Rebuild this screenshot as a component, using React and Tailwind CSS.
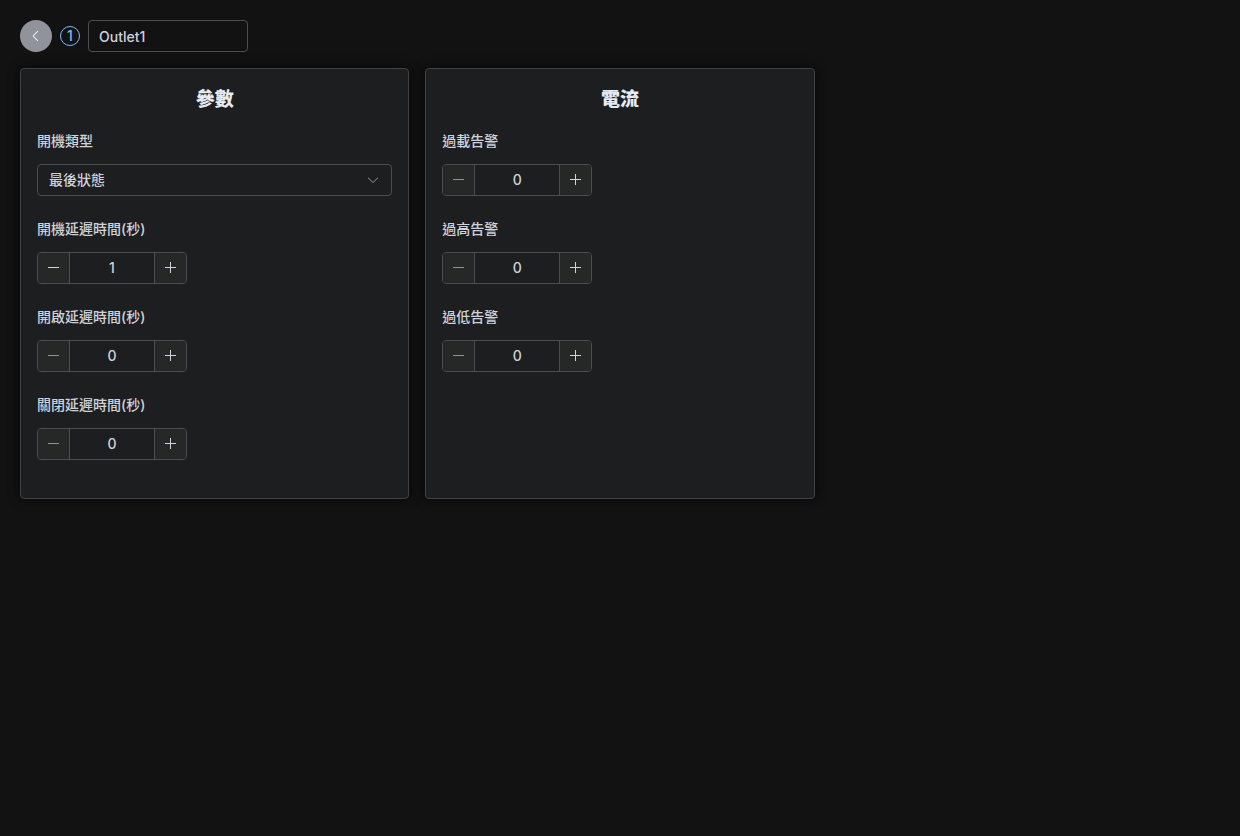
import { useState } from "react";

const ICONS = {
  left: "M609.408 149.376 277.76 489.6a32 32 0 0 0 0 44.672l331.648 340.352a29.12 29.12 0 0 0 41.728 0 30.592 30.592 0 0 0 0-42.752L339.264 511.936l311.872-319.872a30.592 30.592 0 0 0 0-42.688 29.12 29.12 0 0 0-41.728 0z",
  down: "M831.872 340.864 512 652.672 192.128 340.864a30.592 30.592 0 0 0-42.752 0 29.12 29.12 0 0 0 0 41.6L489.664 714.24a32 32 0 0 0 44.672 0l340.288-331.712a29.12 29.12 0 0 0 0-41.728 30.592 30.592 0 0 0-42.752 0z",
};

function Icon({ name, className }) {
  return (
    <svg viewBox="0 0 1024 1024" fill="currentColor" aria-hidden="true" className={className}>
      <path d={ICONS[name]} />
    </svg>
  );
}

function StepIcon({ plus }) {
  return (
    <svg viewBox="0 0 11 12" stroke="currentColor" fill="none" aria-hidden="true" className="h-3 w-[11px]">
      <path d={plus ? "M0 5.5h11M5.5 0v11" : "M0 5.5h11"} />
    </svg>
  );
}

function Card({ title, children }) {
  return (
    <section className="rounded border border-[#414243] bg-[#1d1e1f] p-4 shadow-[0_0_12px_rgba(0,0,0,0.72)]">
      <h2 className="mb-4 text-center text-[19px] leading-[29px] font-black text-[#e5eaf3]">{title}</h2>
      {children}
    </section>
  );
}

function Field({ id, label, children }) {
  return (
    <div className="mb-[22px]">
      <label htmlFor={id} className="mb-3 block leading-[22px]">
        {label}
      </label>
      {children}
    </div>
  );
}

function NumberField({ id, label, initial }) {
  const [value, setValue] = useState(initial);
  return (
    <Field id={id} label={label}>
      <div className="flex h-8 w-[150px] overflow-hidden rounded border border-[#4c4d4f]">
        <button
          type="button"
          aria-label={`${label} −`}
          disabled={value <= 0}
          onClick={() => setValue(value - 1)}
          className="flex w-8 shrink-0 items-center justify-center border-r border-[#4c4d4f] bg-[#262727] disabled:text-[#8d9095]"
        >
          <StepIcon />
        </button>
        <input
          id={id}
          inputMode="numeric"
          value={value}
          onChange={(e) => setValue(Number(e.target.value) || 0)}
          className="min-w-0 flex-1 bg-transparent text-center outline-none"
        />
        <button
          type="button"
          aria-label={`${label} +`}
          onClick={() => setValue(value + 1)}
          className="flex w-8 shrink-0 items-center justify-center border-l border-[#4c4d4f] bg-[#262727]"
        >
          <StepIcon plus />
        </button>
      </div>
    </Field>
  );
}

export default function App() {
  const [name, setName] = useState("Outlet1");
  return (
    <main className="min-h-screen bg-[#121212] p-5 font-['Inter','Noto_Sans_CJK_TC',sans-serif] text-sm font-medium text-[#cfd3dc]">
      <header className="mb-4 flex items-center gap-2">
        <button
          type="button"
          aria-label="返回"
          className="flex size-8 items-center justify-center rounded-full bg-[#909399] text-white"
        >
          <Icon name="left" className="size-[14px]" />
        </button>
        <span className="flex size-5 items-center justify-center rounded-full border border-[#79bbff] text-[#79bbff]">
          1
        </span>
        <input
          aria-label="名稱"
          value={name}
          onChange={(e) => setName(e.target.value)}
          className="h-8 w-40 rounded border border-[#4c4d4f] bg-transparent px-[10px] outline-none"
        />
      </header>
      <div className="grid grid-cols-1 gap-4 sm:grid-cols-2 lg:grid-cols-3">
        <Card title="參數">
          <Field id="boot-type" label="開機類型">
            <div className="grid items-center">
              <select
                id="boot-type"
                className="col-start-1 row-start-1 h-8 w-full appearance-none rounded border border-[#4c4d4f] bg-[#1d1e1f] px-[11px] outline-none"
              >
                <option>最後狀態</option>
              </select>
              <Icon
                name="down"
                className="pointer-events-none col-start-1 row-start-1 mr-3 size-[14px] justify-self-end text-[#8d9095]"
              />
            </div>
          </Field>
          <NumberField id="boot-delay" label="開機延遲時間(秒)" initial={1} />
          <NumberField id="on-delay" label="開啟延遲時間(秒)" initial={0} />
          <NumberField id="off-delay" label="關閉延遲時間(秒)" initial={0} />
        </Card>
        <Card title="電流">
          <NumberField id="overload" label="過載告警" initial={0} />
          <NumberField id="high" label="過高告警" initial={0} />
          <NumberField id="low" label="過低告警" initial={0} />
        </Card>
      </div>
    </main>
  );
}
